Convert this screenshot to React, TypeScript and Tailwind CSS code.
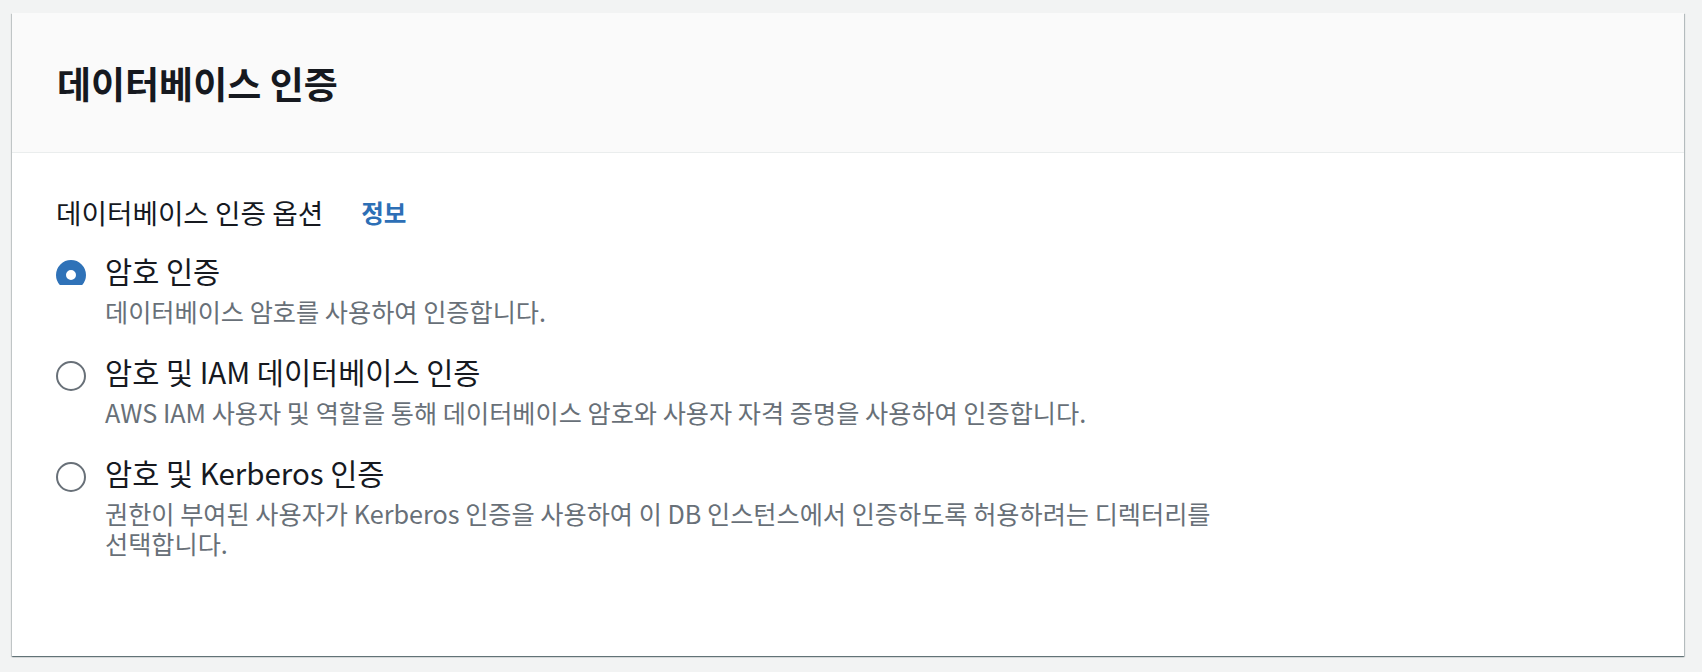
const options = [
  {
    id: "password",
    label: "암호 인증",
    desc: "데이터베이스 암호를 사용하여 인증합니다.",
    checked: true,
  },
  {
    id: "iam",
    label: "암호 및 IAM 데이터베이스 인증",
    desc: "AWS IAM 사용자 및 역할을 통해 데이터베이스 암호와 사용자 자격 증명을 사용하여 인증합니다.",
    checked: false,
  },
  {
    id: "kerberos",
    label: "암호 및 Kerberos 인증",
    desc: "권한이 부여된 사용자가 Kerberos 인증을 사용하여 이 DB 인스턴스에서 인증하도록 허용하려는 디렉터리를 선택합니다.",
    checked: false,
  },
];

function Radio({ checked }: { checked: boolean }) {
  if (checked) {
    // the selected dot is cut off at the bottom in the screenshot
    return (
      <div className="h-[25px] w-[30px] overflow-hidden mt-[9px] shrink-0">
        <div className="w-[30px] h-[30px] rounded-full border-[10px] border-[#2f72b8] bg-white" />
      </div>
    );
  }
  return <div className="w-[30px] h-[30px] rounded-full border-2 border-[#687078] bg-white mt-[9px] shrink-0" />;
}

export default function App() {
  return (
    <div
      className="bg-[#f2f3f3] min-h-[672px] pt-[13px] pl-[12px] pr-[18px] pb-[16px]"
      style={{ fontFamily: "'Noto Sans CJK KR', 'Noto Sans', sans-serif" }}
    >
      <div className="bg-white shadow-[0_1px_1px_0_rgba(0,28,36,0.4),1px_1px_1px_0_rgba(0,28,36,0.2),-1px_1px_1px_0_rgba(0,28,36,0.15)]">
        <div className="h-[140px] bg-[#fafafa] border-b border-[#eaeded] flex items-center px-[45px]">
          <h2 className="text-[37px] font-bold text-[#16191f] leading-[44px]">데이터베이스 인증</h2>
        </div>
        <div className="pt-[40px] pb-[98px] px-[44px] break-keep">
          <div className="flex items-center gap-[38px] text-[27.7px] leading-[38px] text-[#16191f]">
            <span>데이터베이스 인증 옵션</span>
            <a className="text-[24.6px] font-bold text-[#2d6fb6]">정보</a>
          </div>
          <div className="flex flex-col gap-[26px] mt-[20px]">
            {options.map((o) => (
              <div key={o.id} className="flex gap-[19px]">
                <Radio checked={o.checked} />
                <div className="flex flex-col">
                  <p className="text-[29.5px] leading-[38px] text-[#16191f]">{o.label}</p>
                  <p className="text-[25.2px] leading-[30px] text-[#687078] mt-[7px] max-w-[1140px]">{o.desc}</p>
                </div>
              </div>
            ))}
          </div>
        </div>
      </div>
    </div>
  );
}
